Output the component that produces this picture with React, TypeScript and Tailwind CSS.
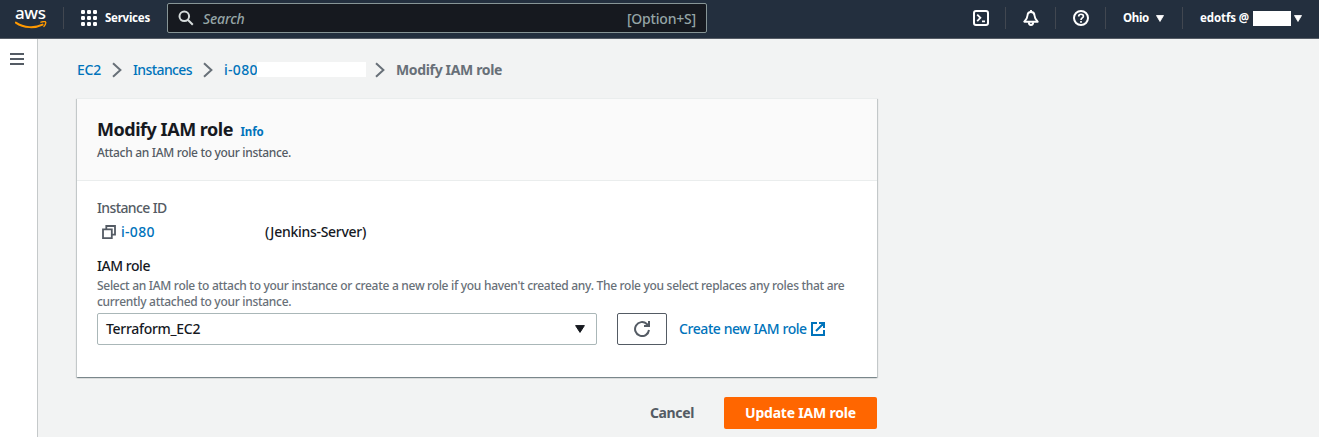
import type { ReactNode } from 'react';

function Divider() {
  return <span className="h-[22px] w-px shrink-0 bg-[#414750]" />;
}

function Caret({ className }: { className: string }) {
  return (
    <svg viewBox="0 0 10 8" preserveAspectRatio="none" className={className} fill="currentColor" stroke="currentColor" strokeLinejoin="round">
      <path d="M0.6 0.6h8.8L5 7.4z" />
    </svg>
  );
}

function AwsLogo() {
  return (
    <div className="ml-[15px] flex h-[22px] w-[32px] shrink-0 flex-col">
      <span className="h-[14px] w-[31px] text-[17px] leading-[11px] font-medium tracking-[-0.4px] text-white">aws</span>
      <svg viewBox="0 0 32 8" className="h-[8px] w-[32px]" fill="none" stroke="#ff9900">
        <path d="M0.8 1.6C9 7.2 20 7.4 27.6 3.6" strokeWidth="1.9" strokeLinecap="round" />
        <path d="M26 1.2c2-.8 4.4-.8 4.6-.2.3.8-.4 3-1.6 4.4" strokeWidth="1.4" strokeLinecap="round" />
      </svg>
    </div>
  );
}

function TopBar() {
  return (
    <header className="flex h-[39px] w-full items-center border-b border-[#545b64] bg-[#232f3e] pb-[2px] text-white">
      <AwsLogo />
      <span className="w-[16px]" />
      <Divider />
      <svg viewBox="0 0 16 16" className="ml-[17px] h-4 w-4" fill="#fff">
        {[0, 6, 12].map((y) => [0, 6, 12].map((x) => <rect key={`${x}-${y}`} x={x} y={y} width="4" height="4" rx="1.2" />))}
      </svg>
      <span className="ml-2 w-[62px] text-[11.5px] font-bold tracking-[-0.25px]">Services</span>
      <div className="flex h-[30px] w-[540px] items-center rounded-[2px] border border-[#879596] bg-[#16191f] px-[11px]">
        <svg viewBox="0 0 16 16" className="ml-[-1px] h-4 w-4" fill="none" stroke="#d5dbdb" strokeWidth="2">
          <circle cx="6.3" cy="6.3" r="4.8" />
          <path d="m9.8 9.8 5 5" />
        </svg>
        <span className="ml-[9px] text-[14px] font-medium tracking-[-0.15px] text-[#95a5a6] italic">Search</span>
        <span className="ml-auto mr-[-1px] text-[14px] font-medium tracking-[-0.2px] text-[#95a5a6]">[Option+S]</span>
      </div>
      <div className="ml-auto flex items-center">
        <svg viewBox="0 0 16 16" className="mr-4 h-4 w-4" fill="none" stroke="#fff" strokeWidth="2">
          <rect x="1" y="1" width="14" height="14" rx="2" />
          <path d="m4.2 4.6 3.2 3.2-3.2 3.4M9 11.3h3" strokeWidth="1.8" />
        </svg>
        <Divider />
        <svg viewBox="0 0 16 16" className="mr-4 ml-[17px] h-4 w-4" fill="none" stroke="#fff" strokeWidth="1.9" strokeLinejoin="round">
          <path d="M8 2C5.7 2 4.6 3.600 4.500 5.500 4.400 8.200 3.500 9.500 1.300 11.700h13.400C12.500 9.500 11.600 8.200 11.500 5.500 11.400 3.600 10.300 2 8 2z" />
          <path d="M8 0v2M5.800 12.300c0 3.600 4.400 3.600 4.400 0" />
        </svg>
        <Divider />
        <svg viewBox="0 0 16 16" className="mr-4 ml-[17px] h-4 w-4" fill="none" stroke="#fff" strokeWidth="2">
          <circle cx="8" cy="8" r="7" />
          <path d="M5.7 6.5C5.7 3.4 10.5 3.6 10.400 6.300 10.300 8 8 7.900 8 10M8 11v1.700" strokeWidth="1.7" />
        </svg>
        <Divider />
        <span className="ml-[17px] w-[33px] text-[11.5px] font-bold tracking-[-0.3px]">Ohio</span>
        <Caret className="h-[7px] w-2" />
        <span className="w-[18px]" />
        <Divider />
        <span className="ml-[17px] w-[53px] text-[11.5px] font-bold tracking-[-0.1px] whitespace-nowrap">edotfs @</span>
        <span className="h-[15px] w-[38px] bg-white" />
        <Caret className="mr-[17px] ml-[3px] h-[7px] w-2" />
      </div>
    </header>
  );
}

function Chevron() {
  return (
    <svg viewBox="0 0 10 16" className="h-4 w-[10px] shrink-0" fill="none" stroke="#687078" strokeWidth="2">
      <path d="m1 1.2 7.4 6.8L1 14.8" />
    </svg>
  );
}

function Breadcrumbs() {
  return (
    <nav className="flex h-[20px] items-center text-[14px] leading-5 font-medium whitespace-nowrap text-[#0073bb]">
      <a className="w-[35px] tracking-[-0.2px]">EC2</a>
      <Chevron />
      <a className="ml-[11px] w-[70px] tracking-[-0.6px]">Instances</a>
      <Chevron />
      <a className="ml-[11px] w-[33px] tracking-[0.3px]">i-080</a>
      <span className="mr-[9px] mb-[2px] h-[15px] w-[109px] bg-white" />
      <Chevron />
      <span className="ml-[11px] font-bold tracking-[-0.35px] text-[#687078]">Modify IAM role</span>
    </nav>
  );
}

function Hint({ children }: { children: ReactNode }) {
  return <p className="text-[12px] leading-4 font-medium tracking-[-0.295px] whitespace-nowrap text-[#687078]">{children}</p>;
}

function RolePanel() {
  return (
    <section className="mt-[18px] h-[279px] w-[800px] bg-white shadow-[0_1px_1px_0_rgba(0,28,36,0.3),1px_1px_1px_0_rgba(0,28,36,0.15),-1px_1px_1px_0_rgba(0,28,36,0.15)]">
      <div className="h-[83px] border-t border-b border-[#eaeded] bg-[#fafafa] px-5 pt-[19px]">
        <div className="flex h-6 items-baseline whitespace-nowrap">
          <h1 className="w-[143.5px] text-[18px] leading-[22px] font-bold tracking-[-0.47px] text-[#16191f]">Modify IAM role</h1>
          <a className="text-[11.5px] leading-[22px] font-bold tracking-[-0.15px] text-[#0073bb]">Info</a>
        </div>
        <p className="mt-[3px] text-[12px] leading-4 font-medium tracking-[-0.325px] text-[#545b64]">Attach an IAM role to your instance.</p>
      </div>
      <div className="px-5 pt-[17px] text-[14px] font-medium text-[#16191f]">
        <div className="leading-5 tracking-[-0.62px] text-[#545b64]">Instance ID</div>
        <div className="mt-1 flex h-5 items-center leading-5">
          <svg viewBox="0 0 14 14" className="mr-[5px] ml-[5px] h-[14px] w-[14px]" fill="none" stroke="#545b64" strokeWidth="1.8">
            <path d="M1 4.400h8.800v8.700H1zM4.300 4.400V1H13v8.700H9.800" />
          </svg>
          <a className="w-[144px] tracking-[0.3px] text-[#0073bb]">i-080</a>
          <span className="tracking-[-0.28px]">(Jenkins-Server)</span>
        </div>
        <div className="mt-[14px] leading-5 tracking-[-0.45px]">IAM role</div>
        <div className="mt-[2px]">
          <Hint>
            Select an IAM role to attach to your instance or create a new role if you haven't created any. The role you select replaces any roles that are
          </Hint>
          <Hint>currently attached to your instance.</Hint>
        </div>
        <div className="mt-[3px] flex h-8 items-center">
          <div className="flex h-8 w-[500px] items-center justify-between rounded-[2px] border border-[#aab7b8] pr-[11px] pl-2">
            <span className="mb-[2px] tracking-[-0.3px]">Terraform_EC2</span>
            <Caret className="h-[8px] w-[10px]" />
          </div>
          <button className="ml-5 flex h-8 w-[50px] items-center justify-center rounded-[2px] border border-[#545b64]">
            <svg viewBox="0 0 16 16" className="h-4 w-4" fill="none" stroke="#545b64" strokeWidth="2">
              <path d="M15 9A7 7 0 1 1 12.8 2.9L15 5M15 0v5h-5" />
            </svg>
          </button>
          <a className="ml-3 flex items-center whitespace-nowrap text-[#0073bb]">
            <span className="mb-[2px] w-[132px] tracking-[-0.42px]">Create new IAM role</span>
            <svg viewBox="0 0 14 14" className="h-[14px] w-[14px]" fill="none" stroke="currentColor" strokeWidth="2">
              <path d="M6 1H1v12h12V8M8 1h5v5M13 1 5 9" />
            </svg>
          </a>
        </div>
      </div>
    </section>
  );
}

export default function App() {
  return (
    <div className="flex h-[437px] w-full flex-col overflow-hidden bg-[#f2f3f3] font-['Noto_Sans',sans-serif]">
      <TopBar />
      <div className="flex flex-1">
        <aside className="flex w-[38px] flex-col items-start gap-[3px] border-r border-[#c5c9ca] bg-white pt-[14px] pl-[10px]">
          <span className="h-[2px] w-[14px] bg-[#545b64]" />
          <span className="h-[2px] w-[14px] bg-[#545b64]" />
          <span className="h-[2px] w-[14px] bg-[#545b64]" />
        </aside>
        <main className="pt-[21px] pl-[39px]">
          <Breadcrumbs />
          <div className="w-[800px]">
            <RolePanel />
            <div className="mt-5 flex h-8 justify-end text-[14px] leading-8 font-bold">
              <button className="mr-[30px] tracking-[-0.37px] text-[#545b64]">Cancel</button>
              <button className="w-[153px] rounded-[2px] bg-[#ff6600] tracking-[-0.2px] text-white">Update IAM role</button>
            </div>
          </div>
        </main>
      </div>
    </div>
  );
}
